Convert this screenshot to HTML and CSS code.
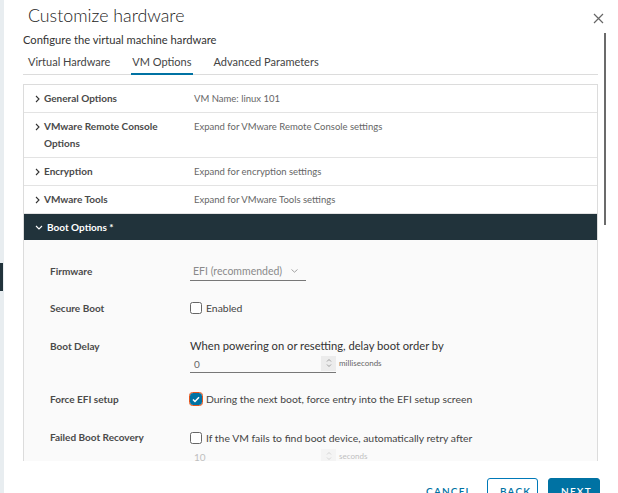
FILE: index.html
```html
<!DOCTYPE html>
<html>
<head>
<meta charset="utf-8">
<link rel="stylesheet" href="styles.css">
</head>
<body>
<div class="app">
  <div class="side"><div class="marker"></div></div>
  <div class="modal">
    <div class="header">
      <h1 class="title">Customize hardware</h1>
      <span class="close"><svg width="11" height="11" viewBox="0 0 11 11"><path d="M1 1L10 10M10 1L1 10" stroke="#666" stroke-width="1.2" fill="none"/></svg></span>
    </div>
    <div class="body">
      <div class="subtitle">Configure the virtual machine hardware</div>
      <div class="tabs">
        <div class="tab">Virtual Hardware</div>
        <div class="tab active">VM Options</div>
        <div class="tab">Advanced Parameters</div>
      </div>
      <div class="panel">
        <div class="row">
          <div class="rlabel"><svg class="chev" width="5" height="8" viewBox="0 0 5 8"><path d="M1 1L4 4L1 7" stroke="#333" stroke-width="1.1" fill="none"/></svg><span>General Options</span></div>
          <div class="rdesc">VM Name: linux 101</div>
        </div>
        <div class="row">
          <div class="rlabel"><svg class="chev" width="5" height="8" viewBox="0 0 5 8"><path d="M1 1L4 4L1 7" stroke="#333" stroke-width="1.1" fill="none"/></svg><span>VMware Remote Console<br>Options</span></div>
          <div class="rdesc">Expand for VMware Remote Console settings</div>
        </div>
        <div class="row">
          <div class="rlabel"><svg class="chev" width="5" height="8" viewBox="0 0 5 8"><path d="M1 1L4 4L1 7" stroke="#333" stroke-width="1.1" fill="none"/></svg><span>Encryption</span></div>
          <div class="rdesc">Expand for encryption settings</div>
        </div>
        <div class="row">
          <div class="rlabel"><svg class="chev" width="5" height="8" viewBox="0 0 5 8"><path d="M1 1L4 4L1 7" stroke="#333" stroke-width="1.1" fill="none"/></svg><span>VMware Tools</span></div>
          <div class="rdesc">Expand for VMware Tools settings</div>
        </div>
        <div class="boot-head">
          <svg class="chevd" width="8" height="5" viewBox="0 0 8 5"><path d="M1 1L4 4L7 1" stroke="#fff" stroke-width="1.1" fill="none"/></svg>
          <span>Boot Options *</span>
        </div>
        <div class="boot">
          <div class="frow">
            <div class="flabel">Firmware</div>
            <div class="fval">
              <div class="select"><span>EFI (recommended)</span><svg width="7" height="4" viewBox="0 0 7 4"><path d="M0.5 0.5L3.5 3.2L6.5 0.5" stroke="#999" stroke-width="0.9" fill="none"/></svg></div>
            </div>
          </div>
          <div class="frow">
            <div class="flabel">Secure Boot</div>
            <div class="fval"><label class="cb"><span class="box"></span><span>Enabled</span></label></div>
          </div>
          <div class="frow tall">
            <div class="flabel">Boot Delay</div>
            <div class="fval col">
              <div class="ftext">When powering on or resetting, delay boot order by</div>
              <div class="numline">
                <div class="num"><span>0</span><span class="spin"><svg width="6" height="10" viewBox="0 0 6 10"><path d="M1 3.5L3 1.5L5 3.5M1 6.5L3 8.5L5 6.5" stroke="#888" stroke-width="0.8" fill="none"/></svg></span></div>
                <span class="unit">milliseconds</span>
              </div>
            </div>
          </div>
          <div class="frow after-tall">
            <div class="flabel">Force EFI setup</div>
            <div class="fval"><label class="cb"><span class="box checked"><svg width="8" height="7" viewBox="0 0 8 7"><path d="M1 3.5L3 5.5L7 1.3" stroke="#fff" stroke-width="1.5" fill="none"/></svg></span><span>During the next boot, force entry into the EFI setup screen</span></label></div>
          </div>
          <div class="frow tall">
            <div class="flabel">Failed Boot Recovery</div>
            <div class="fval col">
              <label class="cb"><span class="box"></span><span>If the VM fails to find boot device, automatically retry after</span></label>
              <div class="numline faded">
                <div class="num"><span>10</span><span class="spin"><svg width="6" height="10" viewBox="0 0 6 10"><path d="M1 3.5L3 1.5L5 3.5M1 6.5L3 8.5L5 6.5" stroke="#888" stroke-width="0.8" fill="none"/></svg></span></div>
                <span class="unit">seconds</span>
              </div>
            </div>
          </div>
        </div>
      </div>
    </div>
    <div class="footer">
      <button class="btn flat">CANCEL</button>
      <button class="btn outline">BACK</button>
      <button class="btn primary">NEXT</button>
    </div>
    <div class="thumb"></div>
  </div>
</div>
</body>
</html>
```
FILE: styles.css
```css
html, body {
  margin: 0;
  padding: 0;
  height: 493px;
  overflow: hidden;
  background: #fff;
  font-family: Lato, "Open Sans", sans-serif;
  color: #333;
}
.app {
  display: flex;
  height: 493px;
}
.side {
  width: 4px;
  flex: none;
  background: #e8edf0;
  position: relative;
}
.marker {
  position: absolute;
  left: 0;
  top: 263px;
  width: 3px;
  height: 28px;
  background: #21333b;
}
.modal {
  flex: 1;
  position: relative;
  display: flex;
  flex-direction: column;
  background: #fff;
}
.header {
  height: 33px;
  flex: none;
  display: flex;
  align-items: flex-start;
  justify-content: space-between;
  padding: 0 14px 0 24px;
  box-sizing: border-box;
}
.title {
  margin: 5px 0 0;
  font-size: 17.8px;
  line-height: 20px;
  font-weight: 300;
  color: #222;
}
.close {
  margin-top: 13px;
  display: block;
  line-height: 0;
}
.body {
  height: 428px;
  overflow: hidden;
  padding: 0 20px 0 19px;
  flex: none;
}
.subtitle {
  margin-top: 0;
  font-size: 11.2px;
  line-height: 14px;
  color: #333;
}
.tabs {
  margin-top: 3px;
  height: 24px;
  display: flex;
  border-bottom: 1px solid #dcdcdc;
  padding-left: 4px;
  gap: 20px;
}
.tab {
  font-size: 11px;
  line-height: 14px;
  padding: 5px 1px 0;
  color: #444;
  box-sizing: border-box;
  height: 24px;
}
.tab.active {
  border-bottom: 2px solid #0072a3;
  height: 25px;
  margin-bottom: -1px;
}
.panel {
  margin-top: 9px;
  border: 1px solid #dcdcdc;
  border-bottom: none;
  background: #fafafa;
}
.row {
  display: grid;
  grid-template-columns: 159px 1fr;
  padding: 5px 0 5px 11px;
  background: #fff;
  border-bottom: 1px solid #e3e3e3;
  line-height: 17px;
}
.rlabel {
  display: flex;
  align-items: flex-start;
  gap: 4px;
  font-size: 10px;
  font-weight: 700;
  color: #4a4a4a;
}
.chev {
  margin-top: 4.5px;
  flex: none;
}
.rdesc {
  font-size: 9.5px;
  color: #666;
}
.boot-head {
  height: 26px;
  background: #21333b;
  color: #fff;
  display: flex;
  align-items: center;
  padding-left: 11px;
  gap: 4px;
  font-size: 10px;
  font-weight: 700;
}
.chevd {
  flex: none;
}
.boot {
  padding: 21px 0 0 26px;
  display: flex;
  flex-direction: column;
  gap: 17px;
}
.frow {
  display: grid;
  grid-template-columns: 140px 1fr;
  min-height: 20px;
  align-items: center;
}
.frow.tall {
  align-items: start;
  margin-top: 2px;
}
.frow.after-tall {
  margin-top: -1px;
}
.frow.tall .flabel {
  line-height: 18px;
}
.flabel {
  font-size: 10px;
  font-weight: 700;
  color: #4a4a4a;
}
.fval {
  display: flex;
  align-items: center;
}
.fval.col {
  flex-direction: column;
  align-items: flex-start;
}
.select {
  width: 116px;
  height: 20px;
  box-sizing: border-box;
  border-bottom: 1px solid #777;
  display: flex;
  align-items: center;
  gap: 9px;
  padding-left: 3px;
  font-size: 10.5px;
  color: #8a8a8a;
}
.cb {
  display: flex;
  align-items: center;
  gap: 4px;
  font-size: 10.4px;
  color: #444;
  min-height: 20px;
}
.box {
  width: 12px;
  height: 12px;
  box-sizing: border-box;
  border: 1px solid #666;
  border-radius: 2.5px;
  background: #fff;
  display: flex;
  align-items: center;
  justify-content: center;
  flex: none;
}
.box.checked {
  background: #0072a3;
  border-color: #0072a3;
  outline: 1.5px solid #e4541c;
  outline-offset: 0.5px;
}
.ftext {
  font-size: 11.2px;
  line-height: 18px;
  color: #333;
}
.numline {
  display: flex;
  align-items: center;
  gap: 3px;
}
.num {
  width: 146px;
  height: 18px;
  box-sizing: border-box;
  border-bottom: 1px solid #777;
  display: flex;
  align-items: center;
  justify-content: space-between;
  padding-left: 4px;
  font-size: 10px;
  color: #666;
}
.spin {
  width: 15px;
  height: 15px;
  background: #ececec;
  display: flex;
  align-items: center;
  justify-content: center;
  margin-bottom: 1px;
}
.unit {
  font-size: 8px;
  color: #666;
  margin-bottom: 3px;
}
.faded {
  opacity: 0.4;
}
.footer {
  flex: 1;
  display: flex;
  justify-content: flex-end;
  align-items: flex-start;
  padding: 17px 18px 0 0;
  gap: 10px;
}
.btn {
  font-family: Lato, "Open Sans", sans-serif;
  font-size: 10px;
  font-weight: 600;
  letter-spacing: 1.2px;
  height: 30px;
  padding: 0 12px 4px;
  box-sizing: border-box;
  border-radius: 3px;
  line-height: 14px;
  background: #fff;
  align-self: flex-start;
}
.btn.flat {
  border: 1px solid transparent;
  color: #0072a3;
  padding-right: 4px;
}
.btn.outline {
  border: 1px solid #0079b8;
  color: #0072a3;
  width: 51px;
}
.btn.primary {
  border: 1px solid #0072a3;
  background: #0072a3;
  color: #fff;
  width: 52px;
}
.thumb {
  position: absolute;
  left: 600px;
  top: 33px;
  width: 2px;
  height: 192px;
  background: #6b6b6b;
}
```
